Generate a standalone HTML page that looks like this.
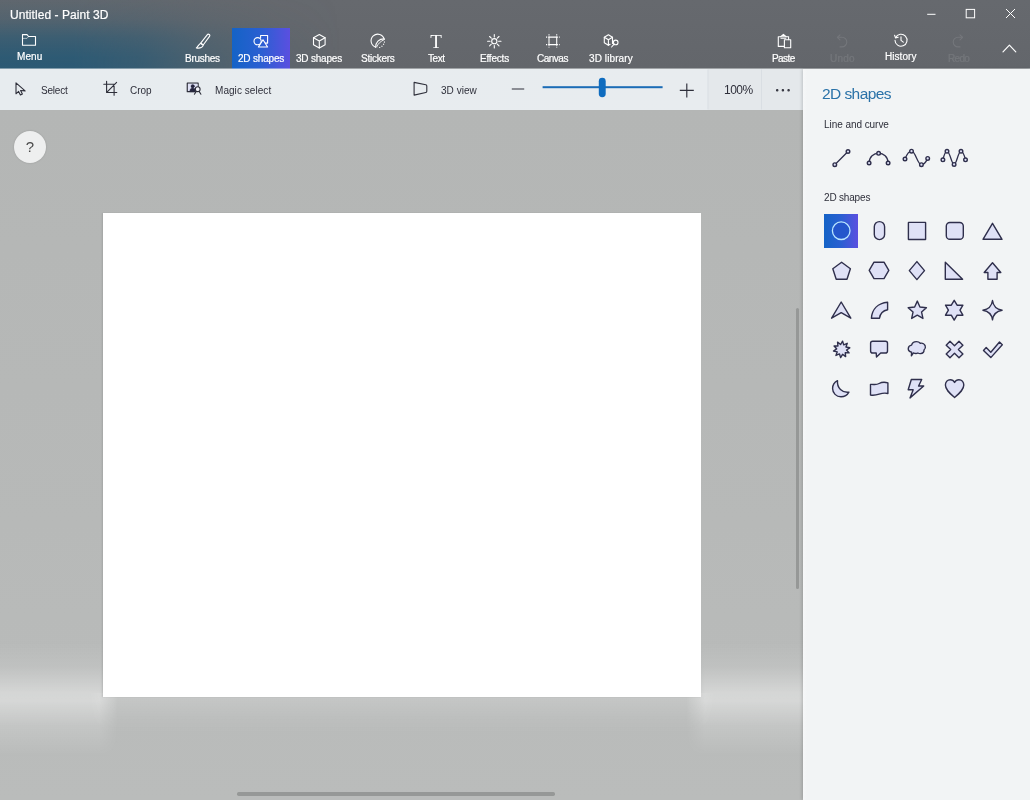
<!DOCTYPE html>
<html><head><meta charset="utf-8"><title>Untitled - Paint 3D</title>
<style>
*{box-sizing:border-box;margin:0;padding:0}
html,body{width:1030px;height:800px;overflow:hidden;background:#b7b9b8;font-family:"Liberation Sans",sans-serif;}
#titlebar{position:absolute;left:0;top:0;width:1030px;height:69px;background:linear-gradient(180deg,#66696e 0%,#63666b 100%);}
#teal{position:absolute;left:0;top:0;width:340px;height:69px;background:linear-gradient(180deg,rgba(44,90,116,.10) 0%,rgba(44,90,116,.30) 28%,rgba(44,90,116,.72) 55%,rgba(44,90,116,.96) 82%,rgba(44,90,116,1) 100%);-webkit-mask-image:linear-gradient(90deg,#000 0%,#000 22%,rgba(0,0,0,.8) 42%,rgba(0,0,0,.4) 62%,rgba(0,0,0,.12) 82%,transparent 100%);mask-image:linear-gradient(90deg,#000 0%,#000 22%,rgba(0,0,0,.8) 42%,rgba(0,0,0,.4) 62%,rgba(0,0,0,.12) 82%,transparent 100%)}
#seltab{position:absolute;left:232px;top:28px;width:58px;height:41px;background:linear-gradient(90deg,#1463c6 0%,#2a5fd2 50%,#5b4fe0 100%)}
.t{position:absolute;white-space:nowrap;line-height:12px;font-size:10px;will-change:transform}
.w{color:#fff;-webkit-text-stroke:.2px #fff}
.c{transform:translateX(-50%)}
.dis{opacity:.1}
#toolbar{position:absolute;left:0;top:69px;width:804px;height:41px;background:linear-gradient(90deg,#e7ecef 0%,#e8ecef 707.5px,#e4e8eb 707.5px,#e4e8eb 100%);}
.d{color:#2e2f3a}
#work{position:absolute;left:0;top:110px;width:804px;height:690px;background:linear-gradient(180deg,#b4b6b5 0%,#b7b9b8 60%,#babcbb 100%);overflow:hidden}
#canvas{position:absolute;left:103px;top:103px;width:597.5px;height:484px;background:#fff;box-shadow:-1px 0 1.5px rgba(0,0,0,.10)}
#panel{position:absolute;left:803px;top:69px;width:227px;height:731px;background:linear-gradient(90deg,#f6f7f8 0px,#f2f4f5 4px,#f2f4f5 100%);box-shadow:-1px 0 3px rgba(0,0,0,.17)}
svg{position:absolute;left:0;top:0;overflow:visible;will-change:transform}
.ti *{fill:none;stroke:#fff;stroke-width:1.1;stroke-linejoin:round;stroke-linecap:round}
.tk *{fill:none;stroke:#2e2f3a;stroke-width:1.1;stroke-linejoin:round;stroke-linecap:round}
.sh *{fill:#dfe1f6;stroke:#2f2f4c;stroke-width:1.4;stroke-linejoin:round;stroke-linecap:round}

#help{position:absolute;left:13.500px;top:20.800px;width:32px;height:32px;border-radius:50%;background:#eeefef;box-shadow:0 0 2px rgba(0,0,0,.18);color:#4a4a4a;font-size:15px;line-height:32px;text-align:center;will-change:transform}
#vsb{position:absolute;left:796px;top:198px;width:3px;height:281px;background:#969897;border-radius:1.500px}
#hsb{position:absolute;left:237px;top:682px;width:318px;height:3.500px;background:#969897;border-radius:1.700px}
#glowL{position:absolute;left:0;top:531px;width:118px;height:115px;background:linear-gradient(180deg,rgba(255,255,255,0) 0%,rgba(255,255,255,.10) 22%,rgba(255,255,255,.40) 45%,rgba(255,255,255,.42) 52%,rgba(255,255,255,.16) 74%,rgba(255,255,255,0) 100%);-webkit-mask-image:linear-gradient(90deg,#000 0%,#000 84%,transparent 100%);mask-image:linear-gradient(90deg,#000 0%,#000 84%,transparent 100%)}
#glowR{position:absolute;left:686px;top:531px;width:118px;height:115px;background:linear-gradient(180deg,rgba(255,255,255,0) 0%,rgba(255,255,255,.10) 22%,rgba(255,255,255,.40) 45%,rgba(255,255,255,.42) 52%,rgba(255,255,255,.16) 74%,rgba(255,255,255,0) 100%);-webkit-mask-image:linear-gradient(270deg,#000 0%,#000 84%,transparent 100%);mask-image:linear-gradient(270deg,#000 0%,#000 84%,transparent 100%)}
#glowB{position:absolute;left:88px;top:583px;width:628px;height:42px;background:linear-gradient(180deg,rgba(255,255,255,.2) 0%,rgba(255,255,255,.17) 15%,rgba(255,255,255,.06) 60%,rgba(255,255,255,0) 100%);-webkit-mask-image:linear-gradient(90deg,transparent 0%,#000 4%,#000 96%,transparent 100%);mask-image:linear-gradient(90deg,transparent 0%,#000 4%,#000 96%,transparent 100%)}
.sh .nf *{fill:none;stroke-width:1.3}
</style></head><body>
<div id="titlebar"><div id="teal"></div></div>
<div id="seltab"></div>
<div id="toolbar"></div><div style="position:absolute;left:0;top:68px;width:1030px;height:1px;background:rgba(232,237,240,.45)"></div>
<div id="work">
 <div id="glowL"></div><div id="glowR"></div><div id="glowB"></div>
 <div id="canvas"></div>
 <div id="help">?</div>
 <div id="vsb"></div><div id="hsb"></div>
</div>
<div id="panel"></div>
<svg class="ti" width="1030" height="70" viewBox="0 0 1030 70">
 <!-- menu folder -->
 <path d="M22.5 45.3V34.6H27l1.6 1.9h6.9v8.8z"/><path d="M22.5 38.4H27l1.6-1.9" style="stroke-width:.8;opacity:.7"/>
 <!-- brush -->
 <path d="M207.200 34.800q.9-1.100 2-.3t.3 1.900l-6.300 8.600-2.500-1.800z"/><path d="M200.700 43.200l2.500 1.800c-.2 2.400-2.800 3.600-6.900 2.900 1.800-1 1.900-3.300 4.400-4.700z"/>
 <!-- 2d shapes -->
 <circle cx="257.600" cy="41.200" r="3.600"/><path d="M260.600 38V35.500h7v7.600h-2.200"/><path d="M263 39.800l4.600 7.200h-9.200z"/>
 <!-- 3d shapes cube -->
 <path d="M319.300 34.500l5.800 3.200v7l-5.800 3.300-5.800-3.300v-7z"/><path d="M313.500 37.700l5.800 3.300 5.800-3.300M319.300 41v7"/>
 <!-- stickers -->
 <g style="stroke-width:1"><path d="M384.300 39.300A6.700 6.700 0 1 0 375.700 47.200"/><path d="M375.700 47.200C375.600 42.200 379 38.900 384.100 38.900"/><path d="M376.700 46.800C378 43.600 380.700 41.200 384.100 39.700" style="stroke-width:.9"/><path d="M384.500 41.500A6.700 6.700 0 0 1 377.800 47.600" style="stroke-dasharray:1.100 1.300;stroke-linecap:butt"/></g>
 <!-- effects -->
 <circle cx="494.300" cy="41.200" r="2.600"/><path d="M494.300 34.500v2.400M494.300 45.500v2.400M487.600 41.200h2.400M498.600 41.200h2.400M489.600 36.500l1.700 1.700M497.300 44.200l1.700 1.700M499 36.500l-1.700 1.700M491.300 44.200l-1.700 1.700"/>
 <!-- canvas -->
 <rect x="549" y="37.100" width="7.700" height="7.500"/><path d="M549 34.200v2.900M556.700 34.200v2.900M549 44.600v3M556.700 44.600v3M546 37.100h3M546 44.600h3M556.700 37.100h3M556.700 44.600h3" style="stroke-dasharray:1.200 1;stroke-linecap:butt"/>
 <!-- 3d library -->
 <path d="M612.500 43.500v-6.200l-4.100-2.600-4.100 2.600v5.400l4.100 2.600 1.700-1"/><path d="M604.300 37.300l4.100 2.500 4.100-2.500M608.400 39.800v5.500"/><circle cx="615.700" cy="42.400" r="2.300"/><path d="M614.100 44.200l-2.500 2.800"/>
 <!-- paste -->
 <g style="stroke-width:1"><path d="M784.400 46.400h-6.100v-9.700h10.300v2.900"/><path d="M780.700 36.700l2.700-2.400 2.700 2.400M781 38.300h4.800" /><rect x="784.400" y="39.700" width="6.300" height="8"/></g>
 <!-- history -->
 <path d="M895.600 37.600a6 6 0 1 1-.6 2.600"/><path d="M894.600 35.300l.9 2.600 2.700-.7"/><path d="M901 36.800v3.600l2.300 1.700"/>
 <!-- chevron -->
 <path d="M1003 51.800l6.400-6.600 6.400 6.600" style="stroke-width:1.200"/>
 <!-- window controls -->
 <path d="M927.200 14.300h8.300M1006 9l9 9M1015 9l-9 9" style="stroke-width:1;stroke-linecap:butt"/><rect x="966.200" y="9.400" width="8.400" height="8.400" style="stroke-width:1;stroke-linejoin:miter"/>
 <!-- undo / redo (disabled) -->
 <g opacity=".1"><path d="M837.500 37.300h4.500a4.800 4.800 0 0 1 0 9.600h-2"/><path d="M840 34.800l-2.600 2.500 2.600 2.500"/>
 <path d="M962.500 37.300h-4.500a4.800 4.800 0 0 0 0 9.600h2"/><path d="M960 34.800l2.600 2.500-2.600 2.500"/></g>
 <!-- text T -->
 <text x="436.100" y="47.600" text-anchor="middle" style="font-family:'Liberation Serif',serif;font-size:19px;fill:#fff;stroke:none">T</text>
</svg>

<svg class="tk" width="810" height="112" viewBox="0 0 810 112">
 <!-- cursor -->
 <path d="M16 82.800v11l2.600-2.400 1.800 3.500 2-1-1.800-3.400 4.500.4z"/>
 <!-- crop -->
 <path d="M106.600 81.300v11.200h10.200M103.800 84.300h10.300v10.900M107 92.100l9.600-9.800"/>
 <!-- magic select -->
 <path d="M195.300 91.700h-8v-8.500h10.800v3.500" style="stroke-width:1.250"/>
 <path d="M187.900 83.800h9.600v3.200c-1.600.2-2.600 1.200-2.700 2.900v1.200h-6.900z" style="fill:#dfe1f5;stroke:none"/>
 <path d="M189.900 91.300c.1-2.300 1.200-3.400 2.800-3.400 1.300 0 2.200.7 2.600 1.800l-.2 1.600z" style="fill:#26263f;stroke:#26263f;stroke-width:.6"/><circle cx="192.700" cy="86.200" r="1.700" style="fill:#26263f;stroke:#26263f;stroke-width:.4"/>
 <circle cx="197.700" cy="89.200" r="2.400" style="fill:#f4f5fb"/><path d="M196.300 91.400l-1.900 2.800M199.100 91.400l1.800 2.800"/>
 <!-- 3d view -->
 <path d="M414.100 82.400v12.700l11.700-2.600q1-.2 1-1.200v-5.300q0-1-1-1.200z"/>
 <!-- minus / plus -->
 <path d="M511.800 89h12.400M679.800 90.400h14M686.800 83.400v14" style="stroke-linecap:butt;stroke-width:1.150"/>
 <!-- slider -->
 <rect x="542.600" y="86.200" width="120" height="2" style="fill:#1b6cb6;stroke:none"/>
 <rect x="598.800" y="77.700" width="6.900" height="19.600" rx="3.450" style="fill:#0f6cbf;stroke:none"/>
 <!-- separators -->
 <path d="M708 69.500v40M761.500 69.500v40" style="stroke:#d9dee3;stroke-width:1;stroke-linecap:butt"/>
 <!-- dots -->
 <g style="fill:#2e2f3a;stroke:none"><circle cx="777.200" cy="90.300" r=".72"/><circle cx="782.900" cy="90.300" r=".72"/><circle cx="788.600" cy="90.300" r=".72"/></g>
</svg>

<div id="seltile" style="position:absolute;left:824px;top:214px;width:34px;height:34px;background:linear-gradient(90deg,#1463c6 0%,#2a5fd2 50%,#5b4fe0 100%)"></div>
<svg class="sh" width="1030" height="420" viewBox="0 0 1030 420">
 <!-- line & curve -->
 <g class="nf">
  <path d="M834.800 164.700L848 151.500"/>
  <path d="M869.100 163C869.100 150 888.100 150 888.100 163"/>
  <path d="M905 159C907 154 909.500 151.200 911.500 151.200C915.500 151.200 917.500 164.700 921.400 164.700C923.500 164.700 926 162 927.700 158.400"/>
  <path d="M942.900 159.800C944 155 945.500 151.300 947 151.300C950 151.300 951.500 164.400 954.100 164.400C956.700 164.400 958 151.300 961 151.300C962.500 151.300 964.300 155 965.500 159.800"/>
 </g>
 <g style="fill:#f2f4f5;stroke-width:1.100">
  <circle cx="834.800" cy="164.700" r="1.800"/><circle cx="848" cy="151.500" r="1.800"/>
  <circle cx="869.100" cy="163" r="1.800"/><circle cx="878.600" cy="153.300" r="1.800"/><circle cx="888.100" cy="163" r="1.800"/>
  <circle cx="905" cy="159" r="1.800"/><circle cx="911.500" cy="151.200" r="1.800"/><circle cx="921.400" cy="164.700" r="1.800"/><circle cx="927.700" cy="158.400" r="1.800"/>
  <circle cx="942.900" cy="159.800" r="1.800"/><circle cx="947" cy="151.300" r="1.800"/><circle cx="954.100" cy="164.400" r="1.800"/><circle cx="961" cy="151.300" r="1.800"/><circle cx="965.500" cy="159.800" r="1.800"/>
 </g>
 <!-- row 1 -->
 <circle cx="841.200" cy="230.700" r="8.800" style="fill:#2456cc;stroke:#b9e6ff;stroke-width:1.300"/>
 <rect x="874.300" y="221.600" width="10.300" height="18" rx="5.150"/>
 <rect x="908.400" y="222.400" width="17.200" height="17.100" rx=".3"/>
 <rect x="946.300" y="222.500" width="17" height="16.800" rx="3.600"/>
 <path d="M992.500 223.300l9.500 16h-19z"/>
 <!-- row 2 -->
 <path d="M841.600 262.200l8.800 6.500-3.400 10.500h-10.800l-3.400-10.500z"/>
 <path d="M874 262.200h10l4.800 8.200-4.800 8.200h-10l-4.800-8.200z"/>
 <path d="M916.900 261.600l7.600 9-7.600 9-7.600-9z"/>
 <path d="M945.300 262.200v17h17.300z"/>
 <path d="M992.500 262.700l8.300 9.800h-3.700v6.700h-9.200v-6.700h-3.700z"/>
 <!-- row 3 -->
 <path d="M841.200 302l9.600 16.200-9.600-5.500-9.600 5.500z"/>
 <path d="M871.400 318.200c.6-9 6.500-15 16.200-16v7.600c-4.600.8-7.400 3.800-8.100 8.400z"/>
 <path d="M917.30 301.10L919.95 307.06L926.43 307.73L921.58 312.09L922.94 318.47L917.30 315.20L911.66 318.47L913.02 312.09L908.17 307.73L914.65 307.06z"/>
 <path d="M954.200 300.300l2.900 4.900h5.800l-2.900 5 2.900 5h-5.800l-2.900 4.900-2.900-4.900h-5.800l2.900-5-2.900-5h5.800z"/>
 <path d="M992.500 300.500c.7 5.600 3.200 8.700 9.600 9.700-6.400 1-8.900 4.100-9.600 9.700-.7-5.600-3.200-8.700-9.600-9.700 6.400-1 8.900-4.100 9.600-9.700z"/>
 <!-- row 4 -->
 <path d="M842.59 341.16L843.70 344.86L847.25 343.32L845.97 346.97L849.74 347.80L846.56 350.00L849.13 352.89L845.26 352.80L845.64 356.65L842.56 354.31L840.61 357.64L839.50 353.94L835.95 355.48L837.23 351.83L833.46 351.00L836.64 348.80L834.07 345.91L837.94 346.00L837.56 342.15L840.64 344.49z"/>
 <path d="M872.700 341.200h12.700q2.100 0 2.100 2.100v7.600q0 2.100-2.100 2.100h-4.700l-4.200 3.900-.3-3.900h-3.500q-2.100 0-2.100-2.100v-7.600q0-2.100 2.100-2.100z"/>
 <path d="M913.400 352.900l-2 2.900.2-3.500c-2.300-.5-3.500-2.100-3.300-4 .2-1.800 1.600-3 3.300-3.200.5-2.100 2.500-3.500 4.800-3.500 1.600 0 3 .6 3.900 1.700 2.300-.5 4.500.8 5 2.900.4 1.500-.2 2.900-1.300 3.800.1 1.900-1.500 3.400-3.500 3.600-1 .1-1.900-.2-2.600-.6-1.200.7-3 .6-4.500-.1z"/>
 <path d="M950 341.300l4.500 4.500 4.500-4.500 3.900 3.900-4.500 4.300 4.500 4.500-3.900 3.800-4.500-4.500-4.500 4.500-3.800-3.800 4.500-4.500-4.500-4.300z"/>
 <path d="M983.500 350.400l2.700-2.800 4.600 4.600 8.700-10.200 2.800 2.700-11.500 12.900z"/>
 <!-- row 5 -->
 <path d="M837.500 380.700c-3 1.500-4.900 4.400-4.900 7.800 0 4.600 3.700 8.300 8.400 8.300 3.400 0 6.400-1.900 7.900-4.700-6.600 .9-12.100-4.200-11.400-11.400z"/>
 <path d="M870.500 384.400c3-.3 5.300 1 8.600-.9s6-1.500 8.800-.7v10.700c-2.900-.8-5.600-.4-8.800.7s-5.600 1.300-8.600.9z"/>
 <path d="M911.300 379.500h10.400l-3.100 6.500h5.100l-13.700 11.900 3.200-8.100h-5z"/>
 <path d="M954.600 397.500c-4.900-4.200-9.200-7.700-9.200-12.400 0-3 2.100-5.400 4.900-5.400 1.900 0 3.400 1 4.300 2.700.9-1.700 2.400-2.700 4.300-2.700 2.800 0 4.900 2.400 4.900 5.400 0 4.700-4.300 8.200-9.200 12.400z"/>
</svg>

<!--LABELS-START-->
<div class="t w" style="left:10.12px;top:7.84px;font-size:12px;line-height:14.40px;letter-spacing:0.056px;">Untitled - Paint 3D</div>
<div class="t w" style="left:16.50px;top:50.84px;font-size:10px;line-height:12.00px;letter-spacing:0.095px;">Menu</div>
<div class="t w" style="left:184.80px;top:52.73px;font-size:10px;line-height:12.00px;letter-spacing:-0.281px;">Brushes</div>
<div class="t w" style="left:237.60px;top:52.73px;font-size:10px;line-height:12.00px;letter-spacing:-0.189px;">2D shapes</div>
<div class="t w" style="left:296.40px;top:52.73px;font-size:10px;line-height:12.00px;letter-spacing:-0.202px;">3D shapes</div>
<div class="t w" style="left:360.70px;top:52.73px;font-size:10px;line-height:12.00px;letter-spacing:-0.252px;">Stickers</div>
<div class="t w" style="left:427.60px;top:52.73px;font-size:10px;line-height:12.00px;letter-spacing:-0.448px;">Text</div>
<div class="t w" style="left:480.10px;top:52.73px;font-size:10px;line-height:12.00px;letter-spacing:-0.198px;">Effects</div>
<div class="t w" style="left:536.60px;top:52.73px;font-size:10px;line-height:12.00px;letter-spacing:-0.501px;">Canvas</div>
<div class="t w" style="left:588.70px;top:52.73px;font-size:10px;line-height:12.00px;letter-spacing:0.100px;">3D library</div>
<div class="t w" style="left:772.40px;top:52.73px;font-size:10px;line-height:12.00px;letter-spacing:-0.570px;">Paste</div>
<div class="t w dis" style="left:830.10px;top:52.73px;font-size:10px;line-height:12.00px;letter-spacing:0.198px;">Undo</div>
<div class="t w" style="left:885.10px;top:51.03px;font-size:10px;line-height:12.00px;letter-spacing:0.046px;">History</div>
<div class="t w dis" style="left:948.00px;top:52.73px;font-size:10px;line-height:12.00px;letter-spacing:-0.702px;">Redo</div>
<div class="t d" style="left:41.20px;top:84.83px;font-size:10px;line-height:12.00px;letter-spacing:-0.219px;">Select</div>
<div class="t d" style="left:130.30px;top:84.83px;font-size:10px;line-height:12.00px;letter-spacing:-0.062px;">Crop</div>
<div class="t d" style="left:214.60px;top:84.83px;font-size:10px;line-height:12.00px;letter-spacing:0.057px;">Magic select</div>
<div class="t d" style="left:440.70px;top:84.83px;font-size:10px;line-height:12.00px;letter-spacing:0.037px;">3D view</div>
<div class="t d" style="left:723.52px;top:82.94px;font-size:12px;line-height:14.40px;letter-spacing:-0.501px;">100%</div>
<div class="t " style="left:822.08px;top:85.43px;font-size:15.5px;line-height:18.60px;letter-spacing:-0.564px;color:#2a72a8;">2D shapes</div>
<div class="t d" style="left:823.90px;top:119.23px;font-size:10px;line-height:12.00px;letter-spacing:-0.055px;">Line and curve</div>
<div class="t d" style="left:823.90px;top:192.14px;font-size:10px;line-height:12.00px;letter-spacing:-0.177px;">2D shapes</div>
<!--LABELS-END-->
</body></html>
